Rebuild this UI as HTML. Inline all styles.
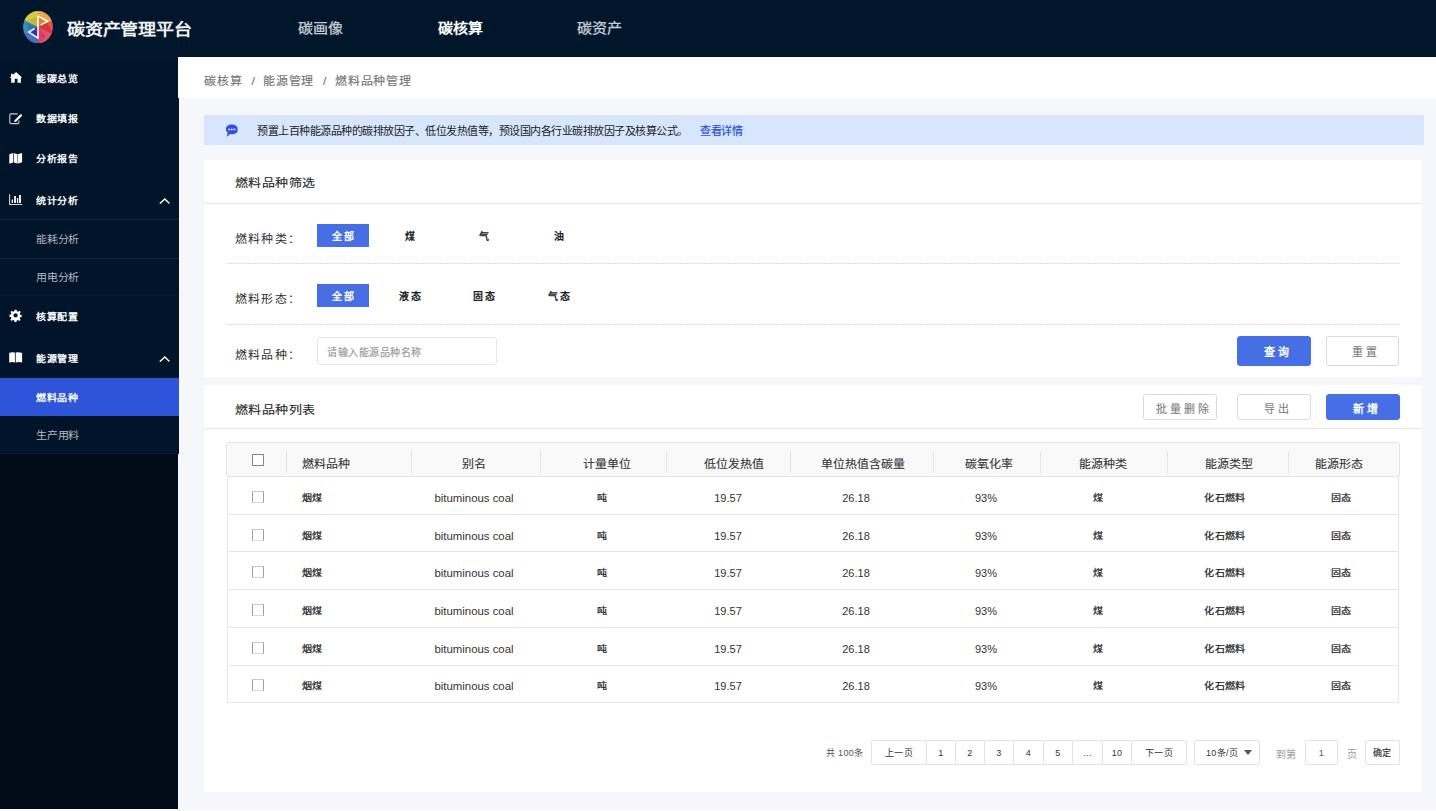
<!DOCTYPE html>
<html lang="zh-CN">
<head>
<meta charset="utf-8">
<style>
*{margin:0;padding:0;box-sizing:border-box}
html,body{width:1436px;height:811px;overflow:hidden;background:#f6f7fa;font-family:"Liberation Sans",sans-serif;color:#333}
.abs{position:absolute}
.sq,.th,.lbl,.ct,.mi .t,.crumb-t,.nav,.logo-t{transform:scaleY(0.9);transform-origin:50% 50%}
#hdr{left:0;top:0;width:1436px;height:57px;background:#00162b}
.logo-t{left:67px;top:18px;font-size:18px;color:#f2f2f2;font-weight:bold;letter-spacing:-0.25px;line-height:24px}
.nav{top:18px;font-size:15px;line-height:20px;color:#c9ced6;-webkit-text-stroke:0.3px #c9ced6}
.nav.on{color:#fff;font-weight:bold;-webkit-text-stroke:0}
#side{left:0;top:57px;width:178px;height:752px;background:#000c17}
.menu{left:0;top:57px;width:179px;height:397px;background:#001529}
.mi{position:absolute;left:0;width:179px;height:40px}
.mi .t{position:absolute;left:36px;top:1px;font-size:10px;letter-spacing:0.6px;line-height:40px;color:#fff;font-weight:bold}
.mi.sub .t{color:#b4b9c0;font-weight:normal;font-size:11px;letter-spacing:-0.2px}
.mi .ic{position:absolute;left:9px;top:14px;width:13px;height:13px}
.line{position:absolute;left:0;width:179px;height:1px;background:#0f2640}
#crumb{left:178px;top:57px;width:1258px;height:41px;background:#fff}
.crumb-t{top:73px;font-size:12px;line-height:16px;color:#747474;letter-spacing:0.75px;-webkit-text-stroke:0.15px #747474}
#alert{left:204px;top:115px;width:1220px;height:30px;background:#d8e6fd}
.card{background:#fff;position:absolute}
.ct{font-size:13px;letter-spacing:0.4px;color:#2a2a2a;line-height:18px;-webkit-text-stroke:0.15px #2a2a2a}
.lbl{font-size:12px;color:#2e2e2e;letter-spacing:1.2px;line-height:16px}
.opt{position:absolute;width:52px;height:23px;font-size:10px;letter-spacing:1.6px;text-indent:1.6px;font-weight:bold;line-height:25px;text-align:center;color:#222}
.opt.on{background:#486ee4;color:#fff}
.dash{position:absolute;left:227px;width:1172px;height:1px;background:repeating-linear-gradient(90deg,#dcdcdc 0 2px,transparent 2px 3px)}
.btn{position:absolute;height:30px;border-radius:3px;font-size:11px;line-height:31px;text-align:center;letter-spacing:3px;font-weight:bold;text-indent:7px}
.btn.p{background:#466fe6;color:#fff;border:1px solid #466fe6}
.btn.d{background:#fff;color:#7c7c7c;border:1px solid #dadada;font-weight:normal;-webkit-text-stroke:0.1px #7c7c7c}
.th{position:absolute;white-space:nowrap;font-size:12px;color:#333;-webkit-text-stroke:0.1px #333}
.td{position:absolute;font-size:11px;color:#333;white-space:nowrap}
.td.c{font-size:10px;letter-spacing:0.45px;font-weight:normal;color:#1e1e1e;-webkit-text-stroke:0.25px #1e1e1e}
.td.e{font-size:11.4px}
.cb{position:absolute;width:12px;height:12px;border:1px solid #858585;background:#fff}
.cb.r{border-color:#a0a0a0;border-bottom-color:#d8d8d8;border-top-color:#c8c8c8}
.pg{position:absolute;top:740px;height:25px;line-height:24px;font-size:9px;letter-spacing:0.3px;text-align:center;color:#333;border:1px solid #e3e3e3;background:#fff}
</style>
</head>
<body>
<div id="hdr" class="abs"></div>
<svg class="abs" style="left:22px;top:10px" width="32" height="34" viewBox="0 0 32 34">
  <defs><clipPath id="cc"><ellipse cx="16" cy="17" rx="14.7" ry="16.1"/></clipPath></defs>
  <g clip-path="url(#cc)">
    <rect x="0" y="0" width="32" height="34" fill="#3a8cb6"/>
    <polygon points="16,17 16,0 0,0 0,9" fill="#dcc83e"/>
    <polygon points="16,17 16,6 6,10" fill="#c9b534"/>
    <polygon points="16,0 32,0 32,10 16,17" fill="#eda64c"/>
    <polygon points="16,17 32,10 32,25" fill="#e54f4c"/>
    <polygon points="16,17 25,13 32,25" fill="#d9353d"/>
    <polygon points="16,17 32,25 32,34 16,34" fill="#e6506c"/>
    <polygon points="16,17 24,26 16,34" fill="#d8415e"/>
    <polygon points="16,17 16,34 0,34 0,25" fill="#4a6ec6"/>
    <polygon points="0,9 16,17 0,25" fill="#3b8db5"/>
    <polygon points="4,13 16,17 8,22" fill="#2f7aa4"/>
    <polygon points="8,22 16,17 16,27" fill="#2c3c9c"/>
    <polygon points="16,6 24,11 16,17" fill="#e0852c"/>
  </g>
  <path d="M16 5.8 L16 28.2 L6.8 22 L12.5 18.6 M16 5.8 L25.4 11.3 L19 14.9" fill="none" stroke="#fff" stroke-width="1.5" stroke-linejoin="miter"/>
</svg>
<div class="abs logo-t">碳资产管理平台</div>
<div class="abs nav" style="left:298px">碳画像</div>
<div class="abs nav on" style="left:438px">碳核算</div>
<div class="abs nav" style="left:577px">碳资产</div>

<div id="side" class="abs"></div>
<div class="abs menu"></div>
<div class="line" style="top:57px;background:#0a1b2f"></div>
<div class="mi" style="top:58px"><span class="t">能碳总览</span></div>
<div class="mi" style="top:98px"><span class="t">数据填报</span></div>
<div class="mi" style="top:138px"><span class="t">分析报告</span></div>
<div class="mi" style="top:180px"><span class="t">统计分析</span></div>
<div class="line" style="top:219px"></div>
<div class="mi sub" style="top:218px"><span class="t">能耗分析</span></div>
<div class="line" style="top:258px"></div>
<div class="mi sub" style="top:256px"><span class="t">用电分析</span></div>
<div class="line" style="top:295px;background:#081a2e"></div>
<div class="mi" style="top:296px"><span class="t">核算配置</span></div>
<div class="mi" style="top:338px"><span class="t">能源管理</span></div>
<div class="abs" style="left:0;top:378px;width:179px;height:38px;background:#2e55d8"></div>
<div class="mi" style="top:377px"><span class="t">燃料品种</span></div>
<div class="mi sub" style="top:414px"><span class="t">生产用料</span></div>
<div class="line" style="top:453px;background:#0b1c30"></div>

<div id="crumb" class="abs"></div>
<div class="abs crumb-t" style="left:204px">碳核算</div><div class="abs crumb-t" style="left:251.5px;letter-spacing:0">/</div><div class="abs crumb-t" style="left:263px">能源管理</div><div class="abs crumb-t" style="left:323px;letter-spacing:0">/</div><div class="abs crumb-t" style="left:335px">燃料品种管理</div>

<div id="alert" class="abs"></div>
<div class="abs" style="left:257px;top:124px;font-size:11px;letter-spacing:-0.5px;line-height:14px;color:#222">预置上百种能源品种的碳排放因子、低位发热值等，预设国内各行业碳排放因子及核算公式。</div>
<div class="abs" style="left:700px;top:124px;font-size:11px;letter-spacing:-0.5px;line-height:14px;color:#2650e0;-webkit-text-stroke:0.2px #2650e0">查看详情</div>

<!-- filter card -->
<div class="card" style="left:204px;top:160px;width:1218px;height:217px"></div>
<div class="abs ct" style="left:235px;top:174px">燃料品种筛选</div>
<div class="abs" style="left:204px;top:203px;width:1218px;height:1px;background:#e4e4e4"></div>

<div class="abs lbl" style="left:235px;top:231px">燃料种类：</div>
<div class="opt on" style="left:317px;top:224px">全部</div>
<div class="opt" style="left:384px;top:224px">煤</div>
<div class="opt" style="left:458px;top:224px">气</div>
<div class="opt" style="left:533px;top:224px">油</div>
<div class="dash" style="top:263px"></div>

<div class="abs lbl" style="left:235px;top:291px">燃料形态：</div>
<div class="opt on" style="left:317px;top:284px">全部</div>
<div class="opt" style="left:384px;top:284px">液态</div>
<div class="opt" style="left:458px;top:284px">固态</div>
<div class="opt" style="left:533px;top:284px">气态</div>
<div class="dash" style="top:324px"></div>

<div class="abs lbl" style="left:235px;top:347px">燃料品种：</div>
<div class="abs" style="left:317px;top:337px;width:180px;height:28px;border:1px solid #e6e6e6;border-radius:3px;background:#fff"></div>
<div class="abs" style="left:327px;top:346px;font-size:10px;letter-spacing:0.55px;line-height:14px;color:#9c9c9c;-webkit-text-stroke:0.2px #9c9c9c">请输入能源品种名称</div>
<div class="btn p" style="left:1237px;top:336px;width:74px">查询</div>
<div class="btn d" style="left:1326px;top:336px;width:73px">重置</div>

<!-- list card -->
<div class="card" style="left:204px;top:385px;width:1218px;height:407px"></div>
<div class="abs ct" style="left:235px;top:401px">燃料品种列表</div>
<div class="btn d" style="left:1143px;top:394px;width:74px;height:26px;line-height:28px">批量删除</div>
<div class="btn d" style="left:1237px;top:394px;width:74px;height:26px;line-height:28px">导出</div>
<div class="btn p" style="left:1326px;top:394px;width:74px;height:26px;line-height:28px">新增</div>
<div class="abs" style="left:204px;top:428px;width:1218px;height:1px;background:#e4e4e4"></div>

<!-- TABLE -->
<div class="abs" id="tbl" style="left:227px;top:476px;width:1172px;height:227px;border:1px solid #e6e6e6;border-top:none"></div>
<div class="abs" style="left:226px;top:442px;width:1174px;height:35px;background:#f9f9f9;border:1px solid #e4e4e4;border-radius:3px"></div>

<!-- ICONS -->
<svg class="abs" style="left:4px;top:68px" width="24" height="20" viewBox="0 0 24 20"><path d="M5.6 9.7 L12.1 4 L18.2 9.7 L16.9 9.7 L16.9 14.8 L13.5 14.8 L13.5 10.8 L10.7 10.8 L10.7 14.8 L7.2 14.8 L7.2 9.7 Z M7 5.8 H8.7 V8.6 H7 Z" fill="#fff"/></svg>
<svg class="abs" style="left:4px;top:108px" width="24" height="20" viewBox="0 0 24 20"><path d="M13.6 5.9 H6.9 Q5.8 5.9 5.8 7 V14.6 Q5.8 15.6 6.9 15.6 H13.9 Q14.9 15.6 14.9 14.6 V12.4" fill="none" stroke="#c8ccd2" stroke-width="1.1"/><path d="M10.2 14.1 L10.6 12.2 L16.2 6.6 Q17 5.8 17.8 6.6 Q18.5 7.4 17.7 8.2 L12.1 13.7 Z" fill="#fff"/></svg>
<svg class="abs" style="left:4px;top:148px" width="24" height="20" viewBox="0 0 24 20"><path d="M5.3 6.3 L9.1 5 V14.4 L5.3 15.8 Z M9.8 5 L13.3 6.3 V15.6 L9.8 14.4 Z" fill="#fff"/><path d="M13.7 6.3 L18.1 4.9 V14.2 L13.7 15.6 Z" fill="#fff"/><path d="M13.5 6.3 V15.6" stroke="#8a93a0" stroke-width="0.8"/></svg>
<svg class="abs" style="left:4px;top:190px" width="24" height="20" viewBox="0 0 24 20"><path d="M5.6 4.2 V14.5 H18.3" fill="none" stroke="#d0d4da" stroke-width="1.1"/><path d="M7.7 9.5 H9 V13 H7.7 Z M10.1 6 H11.9 V13 H10.1 Z M12.9 8 H14.2 V13 H12.9 Z M15 5 H16.9 V13 H15 Z" fill="#fff"/></svg>
<svg class="abs" style="left:4px;top:306px" width="24" height="20" viewBox="0 0 24 20"><g transform="translate(11.6 9.4) scale(0.86)"><path d="M-1.2 -6.6 H1.2 L1.5 -4.7 L3 -4.1 L4.6 -5.3 L6 -3.9 L4.8 -2.3 L5.4 -0.9 L7.1 -0.6 V1.8 L5.3 2.1 L4.7 3.5 L5.8 5 L4.3 6.5 L2.8 5.3 L1.3 5.9 L1 7.6 H-1.3 L-1.6 5.8 L-3 5.2 L-4.6 6.4 L-6 5 L-4.9 3.4 L-5.4 2 L-7.2 1.7 V-0.7 L-5.4 -1 L-4.8 -2.4 L-5.9 -4 L-4.5 -5.4 L-2.9 -4.2 L-1.5 -4.8 Z M0 -2.5 A2.5 2.5 0 1 0 0.01 -2.5 Z" fill="#fff" fill-rule="evenodd"/></g></svg>
<svg class="abs" style="left:4px;top:348px" width="24" height="20" viewBox="0 0 24 20"><path d="M5.2 5 Q7.5 3.6 10.9 4.6 V14.6 Q8.3 13.3 5.2 14.5 Z M11.7 4.6 Q15 3.6 18.1 5 V14.5 Q15 13.3 11.7 14.6 Z" fill="#fff"/></svg>
<svg class="abs" style="left:152px;top:190px" width="24" height="20" viewBox="0 0 24 20"><path d="M8.2 13.2 L12.8 9 L17 13.1" fill="none" stroke="#fff" stroke-width="1.4" stroke-linecap="round"/></svg>
<svg class="abs" style="left:152px;top:348px" width="24" height="20" viewBox="0 0 24 20"><path d="M8.2 13.2 L12.8 9 L17 13.1" fill="none" stroke="#fff" stroke-width="1.4" stroke-linecap="round"/></svg>
<svg class="abs" style="left:220px;top:120px" width="24" height="20" viewBox="0 0 24 20"><path d="M7.6 12.6 Q5.9 11.3 5.9 9.4 Q5.9 4.5 11.8 4.5 Q17.7 4.5 17.7 9.4 Q17.7 14.2 11.8 14.2 Q10.8 14.2 10 14.1 Q8.4 16.3 6.3 16.7 Q7.6 15 7.6 12.6 Z" fill="#2f4ee6"/><circle cx="9.2" cy="9.4" r="0.9" fill="#fff"/><circle cx="11.8" cy="9.4" r="0.9" fill="#fff"/><circle cx="14.5" cy="9.4" r="0.9" fill="#fff"/></svg>
<div class="abs" style="left:0;top:809px;width:1436px;height:2px;background:#fbfbfc"></div>
<!-- GEN START -->
<div class="abs" style="left:286px;top:451px;width:1px;height:22px;background:#e6e6e6"></div>
<div class="abs" style="left:411px;top:451px;width:1px;height:22px;background:#e6e6e6"></div>
<div class="abs" style="left:540px;top:451px;width:1px;height:22px;background:#e6e6e6"></div>
<div class="abs" style="left:666px;top:451px;width:1px;height:22px;background:#e6e6e6"></div>
<div class="abs" style="left:790px;top:451px;width:1px;height:22px;background:#e6e6e6"></div>
<div class="abs" style="left:933px;top:451px;width:1px;height:22px;background:#e6e6e6"></div>
<div class="abs" style="left:1040px;top:451px;width:1px;height:22px;background:#e6e6e6"></div>
<div class="abs" style="left:1167px;top:451px;width:1px;height:22px;background:#e6e6e6"></div>
<div class="abs" style="left:1288px;top:451px;width:1px;height:22px;background:#e6e6e6"></div>
<div class="th" style="left:302px;top:447px;height:34px;line-height:34px">燃料品种</div>
<div class="th" style="left:374.0px;top:447px;width:200px;height:34px;line-height:34px;text-align:center">别名</div>
<div class="th" style="left:507.0px;top:447px;width:200px;height:34px;line-height:34px;text-align:center">计量单位</div>
<div class="th" style="left:634.0px;top:447px;width:200px;height:34px;line-height:34px;text-align:center">低位发热值</div>
<div class="th" style="left:763.0px;top:447px;width:200px;height:34px;line-height:34px;text-align:center">单位热值含碳量</div>
<div class="th" style="left:888.5px;top:447px;width:200px;height:34px;line-height:34px;text-align:center">碳氧化率</div>
<div class="th" style="left:1003.0px;top:447px;width:200px;height:34px;line-height:34px;text-align:center">能源种类</div>
<div class="th" style="left:1128.5px;top:447px;width:200px;height:34px;line-height:34px;text-align:center">能源类型</div>
<div class="th" style="left:1239.0px;top:447px;width:200px;height:34px;line-height:34px;text-align:center">能源形态</div>
<div class="cb" style="left:252px;top:454px"></div>
<div class="cb r" style="left:252px;top:491px;width:12px;height:12px"></div>
<div class="td sq c" style="left:302px;top:479.1px;height:37px;line-height:37px">烟煤</div>
<div class="td e" style="left:374.0px;top:480.1px;width:200px;height:37px;line-height:37px;text-align:center">bituminous coal</div>
<div class="td sq c" style="left:502.5px;top:479.1px;width:200px;height:37px;line-height:37px;text-align:center">吨</div>
<div class="td" style="left:628.0px;top:480.1px;width:200px;height:37px;line-height:37px;text-align:center">19.57</div>
<div class="td" style="left:756.0px;top:480.1px;width:200px;height:37px;line-height:37px;text-align:center">26.18</div>
<div class="td" style="left:886.0px;top:480.1px;width:200px;height:37px;line-height:37px;text-align:center">93%</div>
<div class="td sq c" style="left:998.0px;top:479.1px;width:200px;height:37px;line-height:37px;text-align:center">煤</div>
<div class="td sq c" style="left:1125.0px;top:479.1px;width:200px;height:37px;line-height:37px;text-align:center">化石燃料</div>
<div class="td sq c" style="left:1241.0px;top:479.1px;width:200px;height:37px;line-height:37px;text-align:center">固态</div>
<div class="abs" style="left:228px;top:514px;width:1170px;height:1px;background:#e6e6e6"></div>
<div class="cb r" style="left:252px;top:529px;width:12px;height:12px"></div>
<div class="td sq c" style="left:302px;top:516.74px;height:37px;line-height:37px">烟煤</div>
<div class="td e" style="left:374.0px;top:517.74px;width:200px;height:37px;line-height:37px;text-align:center">bituminous coal</div>
<div class="td sq c" style="left:502.5px;top:516.74px;width:200px;height:37px;line-height:37px;text-align:center">吨</div>
<div class="td" style="left:628.0px;top:517.74px;width:200px;height:37px;line-height:37px;text-align:center">19.57</div>
<div class="td" style="left:756.0px;top:517.74px;width:200px;height:37px;line-height:37px;text-align:center">26.18</div>
<div class="td" style="left:886.0px;top:517.74px;width:200px;height:37px;line-height:37px;text-align:center">93%</div>
<div class="td sq c" style="left:998.0px;top:516.74px;width:200px;height:37px;line-height:37px;text-align:center">煤</div>
<div class="td sq c" style="left:1125.0px;top:516.74px;width:200px;height:37px;line-height:37px;text-align:center">化石燃料</div>
<div class="td sq c" style="left:1241.0px;top:516.74px;width:200px;height:37px;line-height:37px;text-align:center">固态</div>
<div class="abs" style="left:228px;top:551px;width:1170px;height:1px;background:#e6e6e6"></div>
<div class="cb r" style="left:252px;top:566px;width:12px;height:12px"></div>
<div class="td sq c" style="left:302px;top:554.38px;height:37px;line-height:37px">烟煤</div>
<div class="td e" style="left:374.0px;top:555.38px;width:200px;height:37px;line-height:37px;text-align:center">bituminous coal</div>
<div class="td sq c" style="left:502.5px;top:554.38px;width:200px;height:37px;line-height:37px;text-align:center">吨</div>
<div class="td" style="left:628.0px;top:555.38px;width:200px;height:37px;line-height:37px;text-align:center">19.57</div>
<div class="td" style="left:756.0px;top:555.38px;width:200px;height:37px;line-height:37px;text-align:center">26.18</div>
<div class="td" style="left:886.0px;top:555.38px;width:200px;height:37px;line-height:37px;text-align:center">93%</div>
<div class="td sq c" style="left:998.0px;top:554.38px;width:200px;height:37px;line-height:37px;text-align:center">煤</div>
<div class="td sq c" style="left:1125.0px;top:554.38px;width:200px;height:37px;line-height:37px;text-align:center">化石燃料</div>
<div class="td sq c" style="left:1241.0px;top:554.38px;width:200px;height:37px;line-height:37px;text-align:center">固态</div>
<div class="abs" style="left:228px;top:589px;width:1170px;height:1px;background:#e6e6e6"></div>
<div class="cb r" style="left:252px;top:604px;width:12px;height:12px"></div>
<div class="td sq c" style="left:302px;top:592.02px;height:37px;line-height:37px">烟煤</div>
<div class="td e" style="left:374.0px;top:593.02px;width:200px;height:37px;line-height:37px;text-align:center">bituminous coal</div>
<div class="td sq c" style="left:502.5px;top:592.02px;width:200px;height:37px;line-height:37px;text-align:center">吨</div>
<div class="td" style="left:628.0px;top:593.02px;width:200px;height:37px;line-height:37px;text-align:center">19.57</div>
<div class="td" style="left:756.0px;top:593.02px;width:200px;height:37px;line-height:37px;text-align:center">26.18</div>
<div class="td" style="left:886.0px;top:593.02px;width:200px;height:37px;line-height:37px;text-align:center">93%</div>
<div class="td sq c" style="left:998.0px;top:592.02px;width:200px;height:37px;line-height:37px;text-align:center">煤</div>
<div class="td sq c" style="left:1125.0px;top:592.02px;width:200px;height:37px;line-height:37px;text-align:center">化石燃料</div>
<div class="td sq c" style="left:1241.0px;top:592.02px;width:200px;height:37px;line-height:37px;text-align:center">固态</div>
<div class="abs" style="left:228px;top:627px;width:1170px;height:1px;background:#e6e6e6"></div>
<div class="cb r" style="left:252px;top:642px;width:12px;height:12px"></div>
<div class="td sq c" style="left:302px;top:629.66px;height:37px;line-height:37px">烟煤</div>
<div class="td e" style="left:374.0px;top:630.66px;width:200px;height:37px;line-height:37px;text-align:center">bituminous coal</div>
<div class="td sq c" style="left:502.5px;top:629.66px;width:200px;height:37px;line-height:37px;text-align:center">吨</div>
<div class="td" style="left:628.0px;top:630.66px;width:200px;height:37px;line-height:37px;text-align:center">19.57</div>
<div class="td" style="left:756.0px;top:630.66px;width:200px;height:37px;line-height:37px;text-align:center">26.18</div>
<div class="td" style="left:886.0px;top:630.66px;width:200px;height:37px;line-height:37px;text-align:center">93%</div>
<div class="td sq c" style="left:998.0px;top:629.66px;width:200px;height:37px;line-height:37px;text-align:center">煤</div>
<div class="td sq c" style="left:1125.0px;top:629.66px;width:200px;height:37px;line-height:37px;text-align:center">化石燃料</div>
<div class="td sq c" style="left:1241.0px;top:629.66px;width:200px;height:37px;line-height:37px;text-align:center">固态</div>
<div class="abs" style="left:228px;top:665px;width:1170px;height:1px;background:#e6e6e6"></div>
<div class="cb r" style="left:252px;top:679px;width:12px;height:12px"></div>
<div class="td sq c" style="left:302px;top:667.3px;height:37px;line-height:37px">烟煤</div>
<div class="td e" style="left:374.0px;top:668.3px;width:200px;height:37px;line-height:37px;text-align:center">bituminous coal</div>
<div class="td sq c" style="left:502.5px;top:667.3px;width:200px;height:37px;line-height:37px;text-align:center">吨</div>
<div class="td" style="left:628.0px;top:668.3px;width:200px;height:37px;line-height:37px;text-align:center">19.57</div>
<div class="td" style="left:756.0px;top:668.3px;width:200px;height:37px;line-height:37px;text-align:center">26.18</div>
<div class="td" style="left:886.0px;top:668.3px;width:200px;height:37px;line-height:37px;text-align:center">93%</div>
<div class="td sq c" style="left:998.0px;top:667.3px;width:200px;height:37px;line-height:37px;text-align:center">煤</div>
<div class="td sq c" style="left:1125.0px;top:667.3px;width:200px;height:37px;line-height:37px;text-align:center">化石燃料</div>
<div class="td sq c" style="left:1241.0px;top:667.3px;width:200px;height:37px;line-height:37px;text-align:center">固态</div>
<div class="abs" style="left:826px;top:746px;font-size:9px;letter-spacing:0.3px;line-height:14px;color:#555">共 100条</div>
<div class="pg" style="left:871px;width:56px;border-radius:2px 0 0 2px;">上一页</div>
<div class="pg" style="left:926px;width:30px;">1</div>
<div class="pg" style="left:955px;width:30px;">2</div>
<div class="pg" style="left:984px;width:30px;">3</div>
<div class="pg" style="left:1013px;width:31px;">4</div>
<div class="pg" style="left:1043px;width:30px;">5</div>
<div class="pg" style="left:1072px;width:31px;">...</div>
<div class="pg" style="left:1102px;width:30px;">10</div>
<div class="pg" style="left:1131px;width:56px;border-radius:0 2px 2px 0;">下一页</div>
<div class="pg" style="left:1194px;width:66px;text-align:left;padding-left:11px;border-radius:2px">10条/页<span style="position:absolute;left:49px;top:9px;width:0;height:0;border-left:4px solid transparent;border-right:4px solid transparent;border-top:5px solid #555"></span></div>
<div class="abs" style="left:1276px;top:748px;font-size:10px;line-height:14px;color:#999">到第</div>
<div class="pg" style="left:1305px;width:33px;border-radius:2px;color:#555">1</div>
<div class="abs" style="left:1347px;top:748px;font-size:10px;line-height:14px;color:#999">页</div>
<div class="pg" style="left:1365px;width:35px;border-radius:2px;-webkit-text-stroke:0.15px #333">确定</div>
<!-- GEN END -->
</body>
</html>
